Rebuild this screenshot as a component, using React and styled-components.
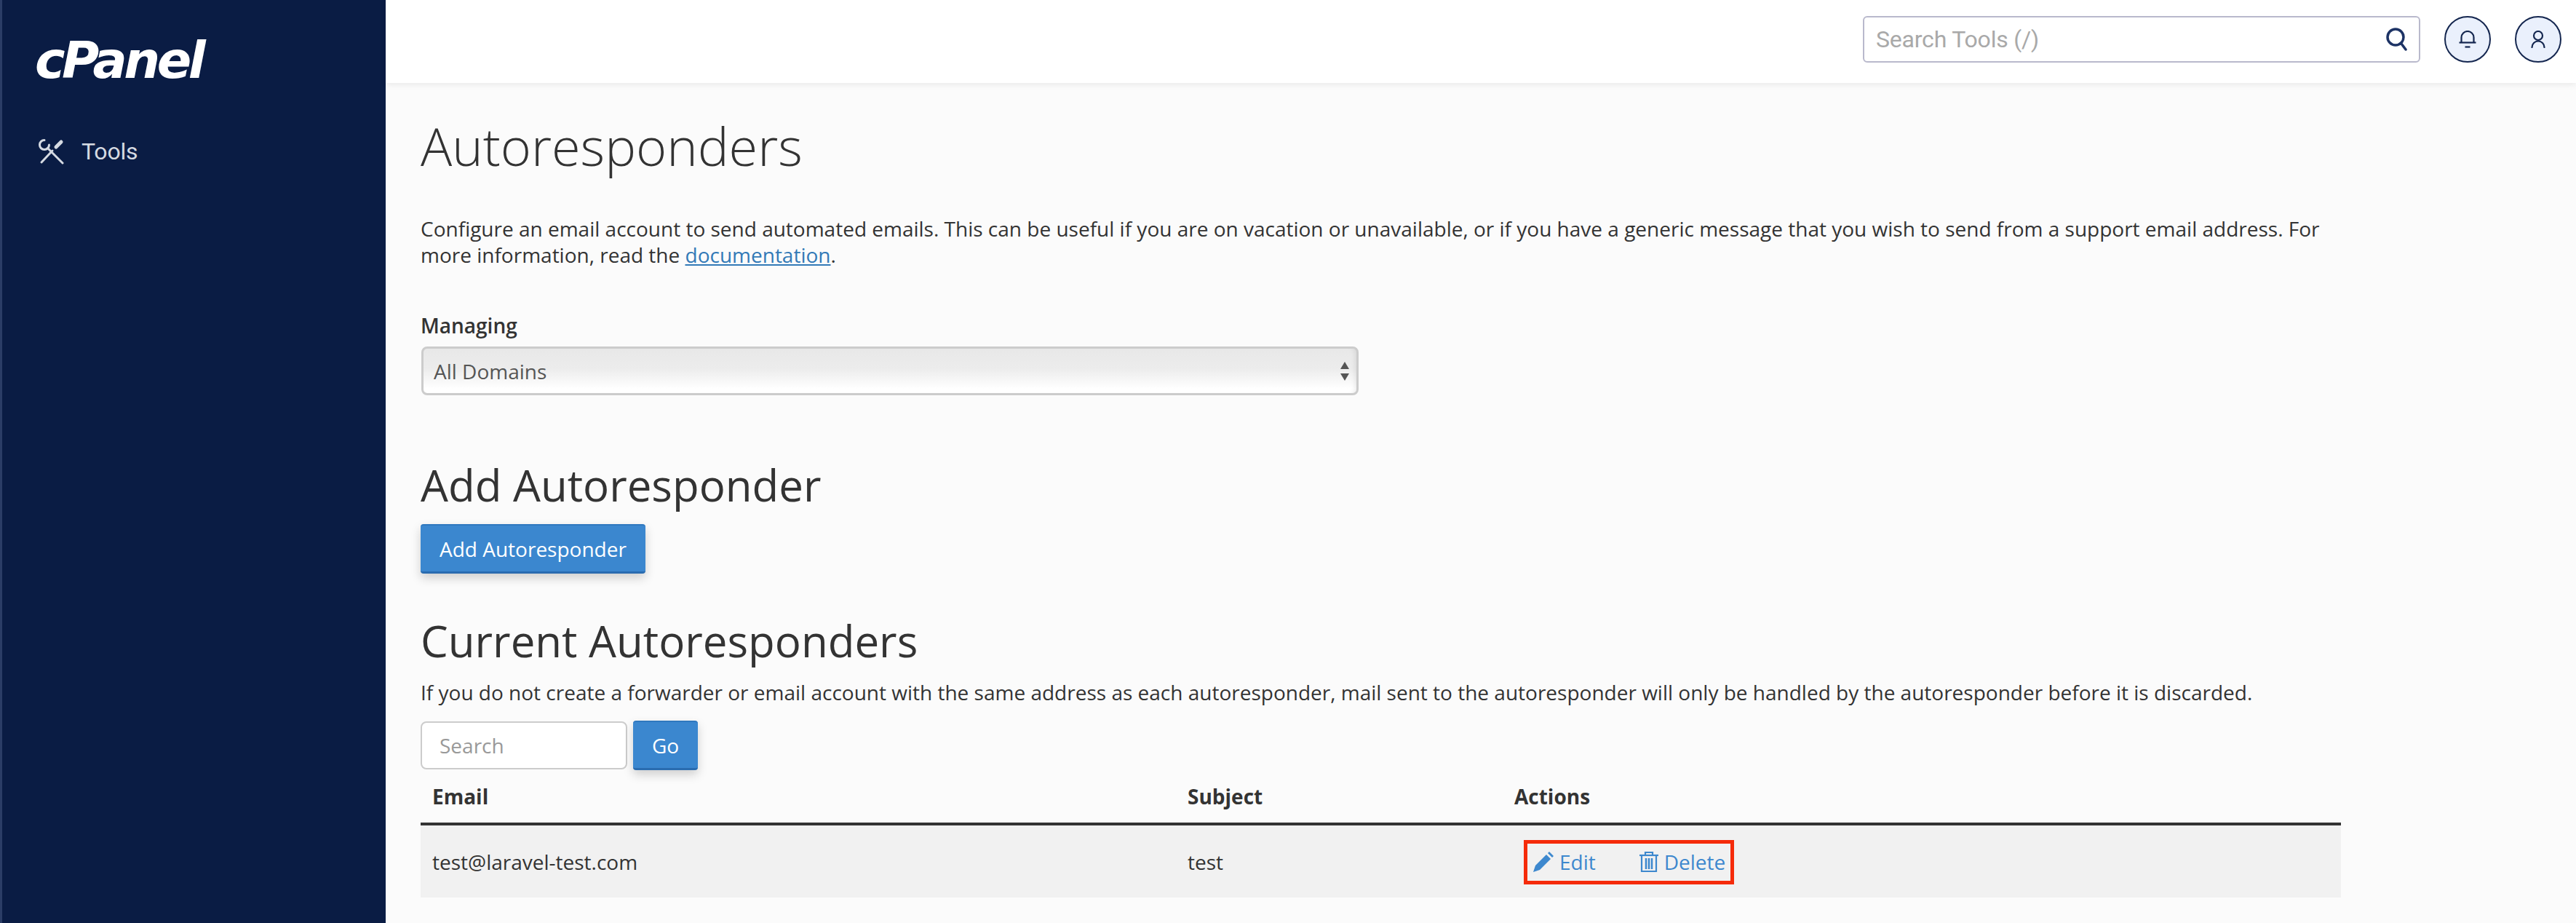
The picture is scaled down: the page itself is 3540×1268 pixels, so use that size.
import React from "react"
import styled, { createGlobalStyle } from "styled-components"

const Global = createGlobalStyle`
html, body {
  margin: 0;
  padding: 0;
  background: #fbfbfb;
}
* {
  box-sizing: border-box;
}
`

const Page = styled.div`
display: flex;
width: 3540px;
height: 1268px;
overflow: hidden;
font-family: "Open Sans", "Liberation Sans", sans-serif;
font-size: 28px;
color: #333;
`

const Sidebar = styled.aside`
width: 530px;
flex-shrink: 0;
background: #0a1c44;
border-left: 3px solid #2b3d66;
padding: 42px 0 0 45px;
`

const Logo = styled.div`
font-family: "DejaVu Sans", sans-serif;
font-weight: 700;
font-style: oblique;
font-size: 70px;
line-height: 82px;
letter-spacing: -4.4px;
color: #fff;
`

const NavItem = styled.div`
display: flex;
align-items: center;
gap: 24px;
margin-top: 64px;
padding-left: 4px;
font-family: "Roboto", sans-serif;
font-size: 32px;
line-height: 40px;
letter-spacing: -0.2px;
color: #d5dae2;
`

const Main = styled.div`
flex: 1;
min-width: 0;
display: flex;
flex-direction: column;
`

const Header = styled.header`
height: 114px;
flex-shrink: 0;
background: #fff;
box-shadow: 0 2px 8px rgba(0, 0, 0, 0.08);
display: flex;
align-items: flex-start;
padding: 22px 20px 0 0;
justify-content: flex-end;
gap: 33px;
position: relative;
`

const ToolSearch = styled.div`
width: 766px;
height: 64px;
border: 2px solid #b9b9cc;
border-radius: 6px;
display: flex;
align-items: center;
justify-content: space-between;
padding: 0 14px 0 16px;
font-family: "Roboto", sans-serif;
font-size: 32px;
letter-spacing: -0.2px;
color: #a9a9a9;
`

const RoundButton = styled.div`
width: 64px;
height: 64px;
flex-shrink: 0;
border-radius: 50%;
border: 2px solid #14264f;
background: #eaf0fc;
display: flex;
align-items: center;
justify-content: center;
`

const Content = styled.main`
padding: 0 48px;
`

const Title = styled.h1`
margin: 43px 0 0;
font-size: 72px;
line-height: 86px;
font-weight: 300;
color: #333;
`

const Intro = styled.p`
margin: 53px 0 0;
width: 2640px;
line-height: 36px;
`

const DocLink = styled.a`
color: #337ab7;
text-decoration: underline;
`

const FieldLabel = styled.label`
display: block;
margin-top: 61px;
font-weight: 600;
line-height: 36px;
`

const SelectBox = styled.div`
margin: 11px 0 0 1px;
width: 1288px;
height: 67px;
border: 3px solid #ccc;
border-radius: 8px;
background: linear-gradient(#e8e8e8, #ececec 45%, #ffffff 90%);
box-shadow: inset -6px 0 6px -4px rgba(0, 0, 0, 0.08);
display: flex;
align-items: center;
justify-content: space-between;
padding: 0 10px 0 14px;
color: #555;
`

const SectionTitle = styled.h2`
margin: ${(p) => p.$top}px 0 0;
font-size: 60px;
line-height: 72px;
font-weight: 400;
color: #333;
`

const Button = styled.button`
display: block;
margin-top: ${(p) => p.$top || 0}px;
height: 68px;
padding: 0 ${(p) => p.$pad}px;
border: none;
border-top: 2px solid #2f78bf;
border-bottom: 3px solid #2a6cb0;
border-radius: 4px;
background: #3b87cf;
box-shadow: 0 6px 14px rgba(0, 0, 0, 0.18);
font-family: inherit;
font-size: 28px;
color: #fff;
`

const Note = styled.p`
margin: 17px 0 0;
line-height: 36px;
`

const SearchRow = styled.div`
display: flex;
align-items: center;
gap: 8px;
margin-top: 21px;
`

const SearchInput = styled.div`
width: 284px;
height: 66px;
border: 2px solid #ccc;
border-radius: 8px;
background: #fff;
padding: 0 24px;
display: flex;
align-items: center;
color: #999;
`

const Table = styled.div`
width: 2639px;
`

const Row = styled.div`
display: grid;
grid-template-columns: 1038px 449px 1fr;
align-items: center;
background: ${(p) => (p.$head ? "transparent" : "#f1f1f1")};
height: ${(p) => (p.$head ? 76 : 99)}px;
border-bottom: ${(p) => (p.$head ? "4px solid #333" : "none")};
font-weight: ${(p) => (p.$head ? 700 : 400)};
`

const Cell = styled.div`
padding-left: 16px;
`

const Actions = styled.div`
display: flex;
align-items: center;
height: 38px;
padding-left: 42px;
color: #3d88ce;
position: relative;
`

const ActionLink = styled.a`
display: flex;
align-items: center;
gap: 8px;
margin-right: ${(p) => p.$gap}px;
`

const Highlight = styled.div`
position: absolute;
left: 29px;
top: -11px;
width: 289px;
height: 61px;
border: 5px solid #f52b0a;
`

const ToolsIcon = () => (
  <svg width="36" height="36" viewBox="0 0 36 36" fill="none" stroke="#d5dae2" strokeWidth="3" strokeLinecap="round">
    <path d="M13.5 13.5l20.5 20.5" />
    <path d="M9 2.5A6.5 6.5 0 1 0 15.5 9" />
    <path d="M5 33l15-16" />
    <path d="M25 12l7-7" strokeWidth="5" />
  </svg>
)

const SearchIcon = () => (
  <svg width="32" height="34" viewBox="0 0 32 34" fill="none" stroke="#1d3365" strokeWidth="3.5" strokeLinecap="round">
    <circle cx="14" cy="14" r="11" />
    <path d="M22 23l6 8" />
  </svg>
)

const BellIcon = () => (
  <svg width="24" height="24" viewBox="0 0 24 24" fill="none" stroke="#14264f" strokeWidth="2.2">
    <path d="M3.5 16V9.5a8.5 8.5 0 0 1 17 0V16" />
    <path d="M0.5 16.5h23" />
    <path d="M8.5 22.5h7" />
  </svg>
)

const UserIcon = () => (
  <svg width="20" height="24" viewBox="0 0 20 24" fill="none" stroke="#14264f" strokeWidth="2.2" strokeLinecap="round">
    <circle cx="10" cy="7" r="6" />
    <path d="M1.5 23a8.5 8.5 0 0 1 17 0" />
  </svg>
)

const SelectArrows = () => (
  <svg width="12" height="26" viewBox="0 0 12 26" fill="#555">
    <path d="M6 0l6 10H0z" />
    <path d="M6 26L0 16h12z" />
  </svg>
)

const PencilIcon = () => (
  <svg width="28" height="28" viewBox="0 0 28 28" fill="#3d88ce">
    <path d="M0 28l3-9L18 4l6 6L9 25z" />
    <path d="M20 2l2-2 6 6-2 2z" />
  </svg>
)

const TrashIcon = () => (
  <svg width="26" height="30" viewBox="0 0 26 30" fill="none" stroke="#3d88ce" strokeWidth="2.2">
    <path d="M0 6h26" />
    <path d="M8 5V2h10v3" />
    <path d="M3 7v21h20V7" />
    <path d="M9 10v15M13 10v15M17 10v15" strokeWidth="2.5" />
  </svg>
)

export default function App() {
  return (
    <Page>
      <Global />
      <Sidebar>
        <Logo>cPanel</Logo>
        <NavItem>
          <ToolsIcon />
          Tools
        </NavItem>
      </Sidebar>
      <Main>
        <Header>
          <ToolSearch>
            Search Tools (/)
            <SearchIcon />
          </ToolSearch>
          <RoundButton><BellIcon /></RoundButton>
          <RoundButton><UserIcon /></RoundButton>
        </Header>
        <Content>
          <Title>Autoresponders</Title>
          <Intro>
            Configure an email account to send automated emails. This can be useful if you are on vacation or unavailable, or if you have a generic message that you wish to send from a support email address. For more information, read the <DocLink>documentation</DocLink>.
          </Intro>
          <FieldLabel>Managing</FieldLabel>
          <SelectBox>
            All Domains
            <SelectArrows />
          </SelectBox>
          <SectionTitle $top={87}>Add Autoresponder</SectionTitle>
          <Button $pad={26} $top={18}>Add Autoresponder</Button>
          <SectionTitle $top={56}>Current Autoresponders</SectionTitle>
          <Note>If you do not create a forwarder or email account with the same address as each autoresponder, mail sent to the autoresponder will only be handled by the autoresponder before it is discarded.</Note>
          <SearchRow>
            <SearchInput>Search</SearchInput>
            <Button $pad={26}>Go</Button>
          </SearchRow>
          <Table>
            <Row $head>
              <Cell>Email</Cell>
              <Cell>Subject</Cell>
              <Cell>Actions</Cell>
            </Row>
            <Row>
              <Cell>test@laravel-test.com</Cell>
              <Cell>test</Cell>
              <Actions>
                <Highlight />
                <ActionLink $gap={60}><PencilIcon />Edit</ActionLink>
                <ActionLink $gap={0}><TrashIcon />Delete</ActionLink>
              </Actions>
            </Row>
          </Table>
        </Content>
      </Main>
    </Page>
  )
}
